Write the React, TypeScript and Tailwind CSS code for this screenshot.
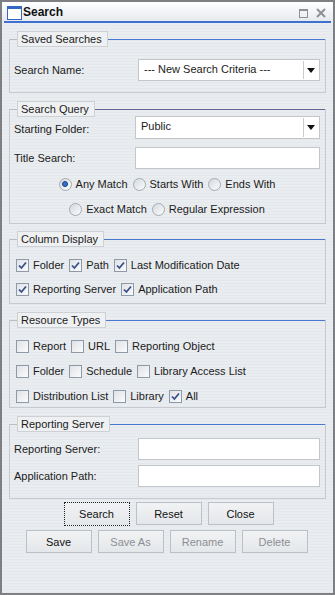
import type { ReactNode } from "react";

const font = "font-['Liberation_Sans',Arial,sans-serif]";

function Section({ title, line, children }: { title: string; line: string; children: ReactNode }) {
	return (
		<div className="mx-[7px] flex flex-col border-x border-b border-[#c6cad0] px-[4px] pr-[5px]">
			<div className="-mt-[8px] -mx-[4px] -mr-[5px] flex h-[16px] items-center">
				<div className="h-px w-[7px] bg-[#b9bec6]" />
				<div className="flex h-[16px] items-center border border-[#cdd1d6] bg-[#eef0f2] px-[3px] pr-[5px] text-[11px] leading-none text-[#1b1b1b]">
					{title}
				</div>
				<div className={`h-px flex-1 ${line}`} />
			</div>
			{children}
		</div>
	);
}

function Check({ checked, label }: { checked?: boolean; label: string }) {
	return (
		<div className="flex items-center gap-[4px]">
			<span className="flex h-[13px] w-[13px] items-center justify-center border border-[#8f9aa8] bg-[linear-gradient(135deg,#dfe2e6,#fbfbfc)]">
				{checked && (
					<svg width="9" height="9" viewBox="0 0 9 9">
						<path d="M1 4.5 L3.4 7 L8 1.5" fill="none" stroke="#3b4f8c" strokeWidth="1.8" />
					</svg>
				)}
			</span>
			<span>{label}</span>
		</div>
	);
}

function Radio({ checked, label }: { checked?: boolean; label: string }) {
	return (
		<div className="flex items-center gap-[4px]">
			<span className="flex h-[13px] w-[13px] items-center justify-center rounded-full border border-[#a3abb4] bg-[linear-gradient(135deg,#d6dade,#fafbfc)]">
				{checked && <span className="h-[6px] w-[6px] rounded-full border border-[#1d3f73] bg-[#2b74d6]" />}
			</span>
			<span>{label}</span>
		</div>
	);
}

function Select({ value, height }: { value: string; height: string }) {
	return (
		<div className={`flex flex-1 border border-[#c3c7cc] bg-white ${height}`}>
			<span className="flex-1 px-[5px] pt-[4px] leading-none">{value}</span>
			<span className="my-px mr-px flex w-[15px] items-center justify-center border-l border-[#c8ccd1] bg-white">
				<svg width="8" height="5" viewBox="0 0 8 5">
					<path d="M0 0 H8 L4 5 Z" fill="#111" />
				</svg>
			</span>
		</div>
	);
}

function Field() {
	return <div className="h-[22px] flex-1 border border-[#c3c7cc] bg-white" />;
}

function Button({ label, disabled, focus }: { label: string; disabled?: boolean; focus?: boolean }) {
	return (
		<div
			className={`flex w-[66px] items-center justify-center border bg-[linear-gradient(#f1f2f4,#e4e7ea)] ${
				focus ? "h-[24px] border-dotted border-[#222]" : "h-[23px] border-[#bcc1c7]"
			} ${disabled ? "text-[#8c8f93]" : "text-[#111]"}`}
		>
			{label}
		</div>
	);
}

export default function App() {
	return (
		<div
			className={`${font} h-[595px] w-[335px] overflow-hidden border-2 border-[#7d7f82] bg-[repeating-linear-gradient(180deg,#eaedf0_0px,#eaedf0_2px,#e4e7eb_2px,#e4e7eb_3px)] text-[11px] leading-[16px] text-[#1b1b1b]`}
		>
			{/* title bar */}
			<div className="flex h-[19px] items-center bg-[linear-gradient(#ffffff,#e6e9ed)] pl-[5px] pr-[7px]">
				<svg width="15" height="14" viewBox="0 0 15 14" className="mt-[3px]">
					<rect x="0.5" y="0.5" width="14" height="13" fill="#fff" stroke="#3566c4" />
					<rect x="0" y="0" width="15" height="3" fill="#3566c4" />
				</svg>
				<span className="ml-px text-[12px] font-bold text-[#111]">Search</span>
				<div className="flex-1" />
				<svg width="9" height="9" viewBox="0 0 9 9" className="mt-[3px]">
					<rect x="0.5" y="0.5" width="8" height="8" fill="none" stroke="#8d9196" />
					<rect x="0.5" y="0.5" width="8" height="1.5" fill="#8d9196" />
				</svg>
				<svg width="10" height="10" viewBox="0 0 10 10" className="ml-[8px] mt-[3px]">
					<path d="M1 1 L9 9 M9 1 L1 9" stroke="#8d9196" strokeWidth="2" />
				</svg>
			</div>
			<div className="mx-[2px] h-[2px] bg-[#3e6fd1]" />

			<div className="mt-[16px]">
				<Section title="Saved Searches" line="bg-[#4a78cf]">
					<div className="mt-[12px] mb-[11px] flex items-center">
						<span className="w-[124px]">Search Name:</span>
						<Select value="--- New Search Criteria ---" height="h-[22px]" />
					</div>
				</Section>
			</div>

			<div className="mt-[16px]">
				<Section title="Search Query" line="bg-[#6b5f94]">
					<div className="-mt-px flex items-center">
						<span className="w-[121px] pt-[2px]">Starting Folder:</span>
						<Select value="Public" height="h-[23px]" />
					</div>
					<div className="mt-[8px] flex items-center">
						<span className="w-[121px]">Title Search:</span>
						<Field />
					</div>
					<div className="mt-[7px] flex h-[16px] items-center justify-center gap-[5px]">
						<Radio checked label="Any Match" />
						<Radio label="Starts With" />
						<Radio label="Ends With" />
					</div>
					<div className="mt-[9px] mb-[6px] flex h-[16px] items-center justify-center gap-[5px]">
						<Radio label="Exact Match" />
						<Radio label="Regular Expression" />
					</div>
				</Section>
			</div>

			<div className="mt-[15px]">
				<Section title="Column Display" line="bg-[#4a78cf]">
					<div className="mt-[10px] flex h-[16px] items-center gap-[5px] pl-[2px]">
						<Check checked label="Folder" />
						<Check checked label="Path" />
						<Check checked label="Last Modification Date" />
					</div>
					<div className="mt-[8px] mb-[6px] flex h-[16px] items-center gap-[5px] pl-[2px]">
						<Check checked label="Reporting Server" />
						<Check checked label="Application Path" />
					</div>
				</Section>
			</div>

			<div className="mt-[16px]">
				<Section title="Resource Types" line="bg-[#4a78cf]">
					<div className="mt-[10px] flex h-[16px] items-center gap-[5px] pl-[2px]">
						<Check label="Report" />
						<Check label="URL" />
						<Check label="Reporting Object" />
					</div>
					<div className="mt-[9px] flex h-[16px] items-center gap-[5px] pl-[2px]">
						<Check label="Folder" />
						<Check label="Schedule" />
						<Check label="Library Access List" />
					</div>
					<div className="mt-[9px] mb-[3px] flex h-[16px] items-center gap-[5px] pl-[2px]">
						<Check label="Distribution List" />
						<Check label="Library" />
						<Check checked label="All" />
					</div>
				</Section>
			</div>

			<div className="mt-[16px]">
				<Section title="Reporting Server" line="bg-[#4a78cf]">
					<div className="mt-[6px] flex items-center">
						<span className="w-[124px]">Reporting Server:</span>
						<Field />
					</div>
					<div className="mt-[5px] mb-[11px] flex items-center">
						<span className="w-[124px]">Application Path:</span>
						<Field />
					</div>
				</Section>
			</div>

			<div className="mt-[3px] flex justify-center gap-[6px] pl-[2px]">
				<Button focus label="Search" />
				<Button label="Reset" />
				<Button label="Close" />
			</div>
			<div className="mt-[4px] flex justify-center gap-[6px] pr-[2px]">
				<Button label="Save" />
				<Button disabled label="Save As" />
				<Button disabled label="Rename" />
				<Button disabled label="Delete" />
			</div>
		</div>
	);
}
